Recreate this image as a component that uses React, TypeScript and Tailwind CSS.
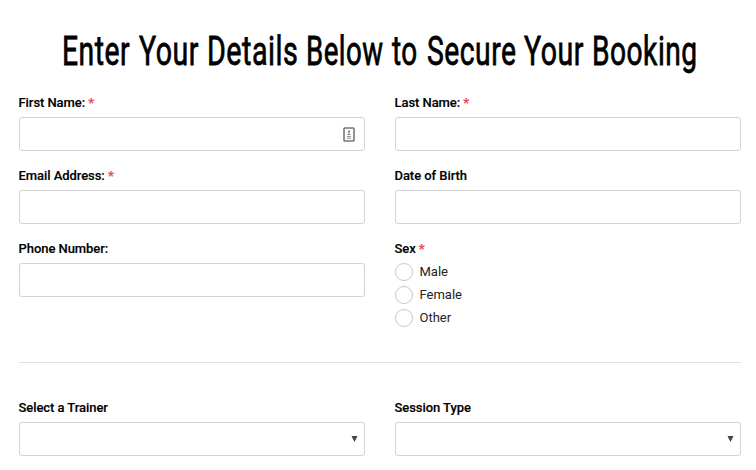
import type { ReactNode } from "react";

const titleWords = [
  { text: "Enter", style: "w-[76.5px] scale-x-[0.69]" },
  { text: "Your", style: "w-[68px] scale-x-[0.695]" },
  { text: "Details", style: "w-[99px] scale-x-[0.7]" },
  { text: "Below", style: "w-[86px] scale-x-[0.675]" },
  { text: "to", style: "w-[35px] scale-x-[0.68]" },
  { text: "Secure", style: "w-[97px] scale-x-[0.69]" },
  { text: "Your", style: "w-[68.5px] scale-x-[0.695]" },
  { text: "Booking", style: "w-[104px] scale-x-[0.687]" },
];

function Field({ label, required, children }: { label: string; required?: boolean; children: ReactNode }) {
  return (
    <div className="flex flex-col">
      <span className="mb-[6px] -ml-[0.5px] h-4 whitespace-pre text-[13px] leading-4 font-medium tracking-[-0.06px] text-black [-webkit-text-stroke:0.15px_black]">
        {label}
        {required && <span className="font-bold text-[#f04a58] [-webkit-text-stroke:0.2px_#f04a58]"> *</span>}
      </span>
      {children}
    </div>
  );
}

function TextBox({ children }: { children?: ReactNode }) {
  return (
    <div className="relative h-[34px] w-full rounded-[3px] border border-[#d3d3d3] bg-white">
      <input className="h-full w-full bg-transparent px-2 text-[13px] outline-none" />
      {children}
    </div>
  );
}

function SelectBox() {
  return (
    <div className="flex h-[34px] w-full items-center justify-end rounded-[3px] border border-[#d3d3d3] pr-[6px]">
      <svg width="7" height="6" viewBox="0 0 7 6">
        <path d="M.5 0h6L3.5 6z" fill="#444" />
      </svg>
    </div>
  );
}

export default function App() {
  return (
    <div className="h-[470px] w-[756px] overflow-hidden bg-white pr-[15px] pl-[19px] font-['Roboto','Liberation_Sans',sans-serif]">
      <h1 className="ml-[43px] flex h-[95px] pt-[26px] text-[41px] leading-[50px] font-normal tracking-[0.7px] whitespace-nowrap text-black [-webkit-text-stroke:0.8px_black]">
        {titleWords.map((word, i) => (
          <span key={i} className={`block shrink-0 origin-left ${word.style}`}>
            {word.text}{" "}
          </span>
        ))}
      </h1>
      <div className="grid grid-cols-[346px_346px] gap-x-[30px] gap-y-[17px]">
        <Field label="First Name:" required>
          <TextBox>
            <svg className="absolute top-[9px] right-[9px]" width="12" height="15" viewBox="0 0 12 15" fill="none">
              <rect x="1" y="1" width="10" height="13" rx="0.8" stroke="#777" strokeWidth="1.6" />
              <circle cx="6" cy="4.5" r="1.1" fill="#777" />
              <path d="M6 5v3M4.2 7.5h3.6M4 9.5h4M4 11.3h4" stroke="#888" strokeWidth="0.9" />
            </svg>
          </TextBox>
        </Field>
        <Field label="Last Name:" required>
          <TextBox />
        </Field>
        <Field label="Email Address:" required>
          <TextBox />
        </Field>
        <Field label="Date of Birth">
          <TextBox />
        </Field>
        <Field label="Phone Number:">
          <TextBox />
        </Field>
        <Field label="Sex" required>
          <div className="flex flex-col gap-[5px]">
            {["Male", "Female", "Other"].map((name) => (
              <div key={name} className="flex h-[18px] items-center gap-[6.5px] text-[13px] text-[#222]">
                <span className="h-[18px] w-[18px] rounded-full border border-[#c8c8c8]" />
                {name}
              </div>
            ))}
          </div>
        </Field>
      </div>
      <div className="mt-[35px] mb-[37px] h-px w-[722px] bg-[#e2e2e2]" />
      <div className="grid grid-cols-[346px_346px] gap-x-[30px]">
        <Field label="Select a Trainer">
          <SelectBox />
        </Field>
        <Field label="Session Type">
          <SelectBox />
        </Field>
      </div>
    </div>
  );
}
